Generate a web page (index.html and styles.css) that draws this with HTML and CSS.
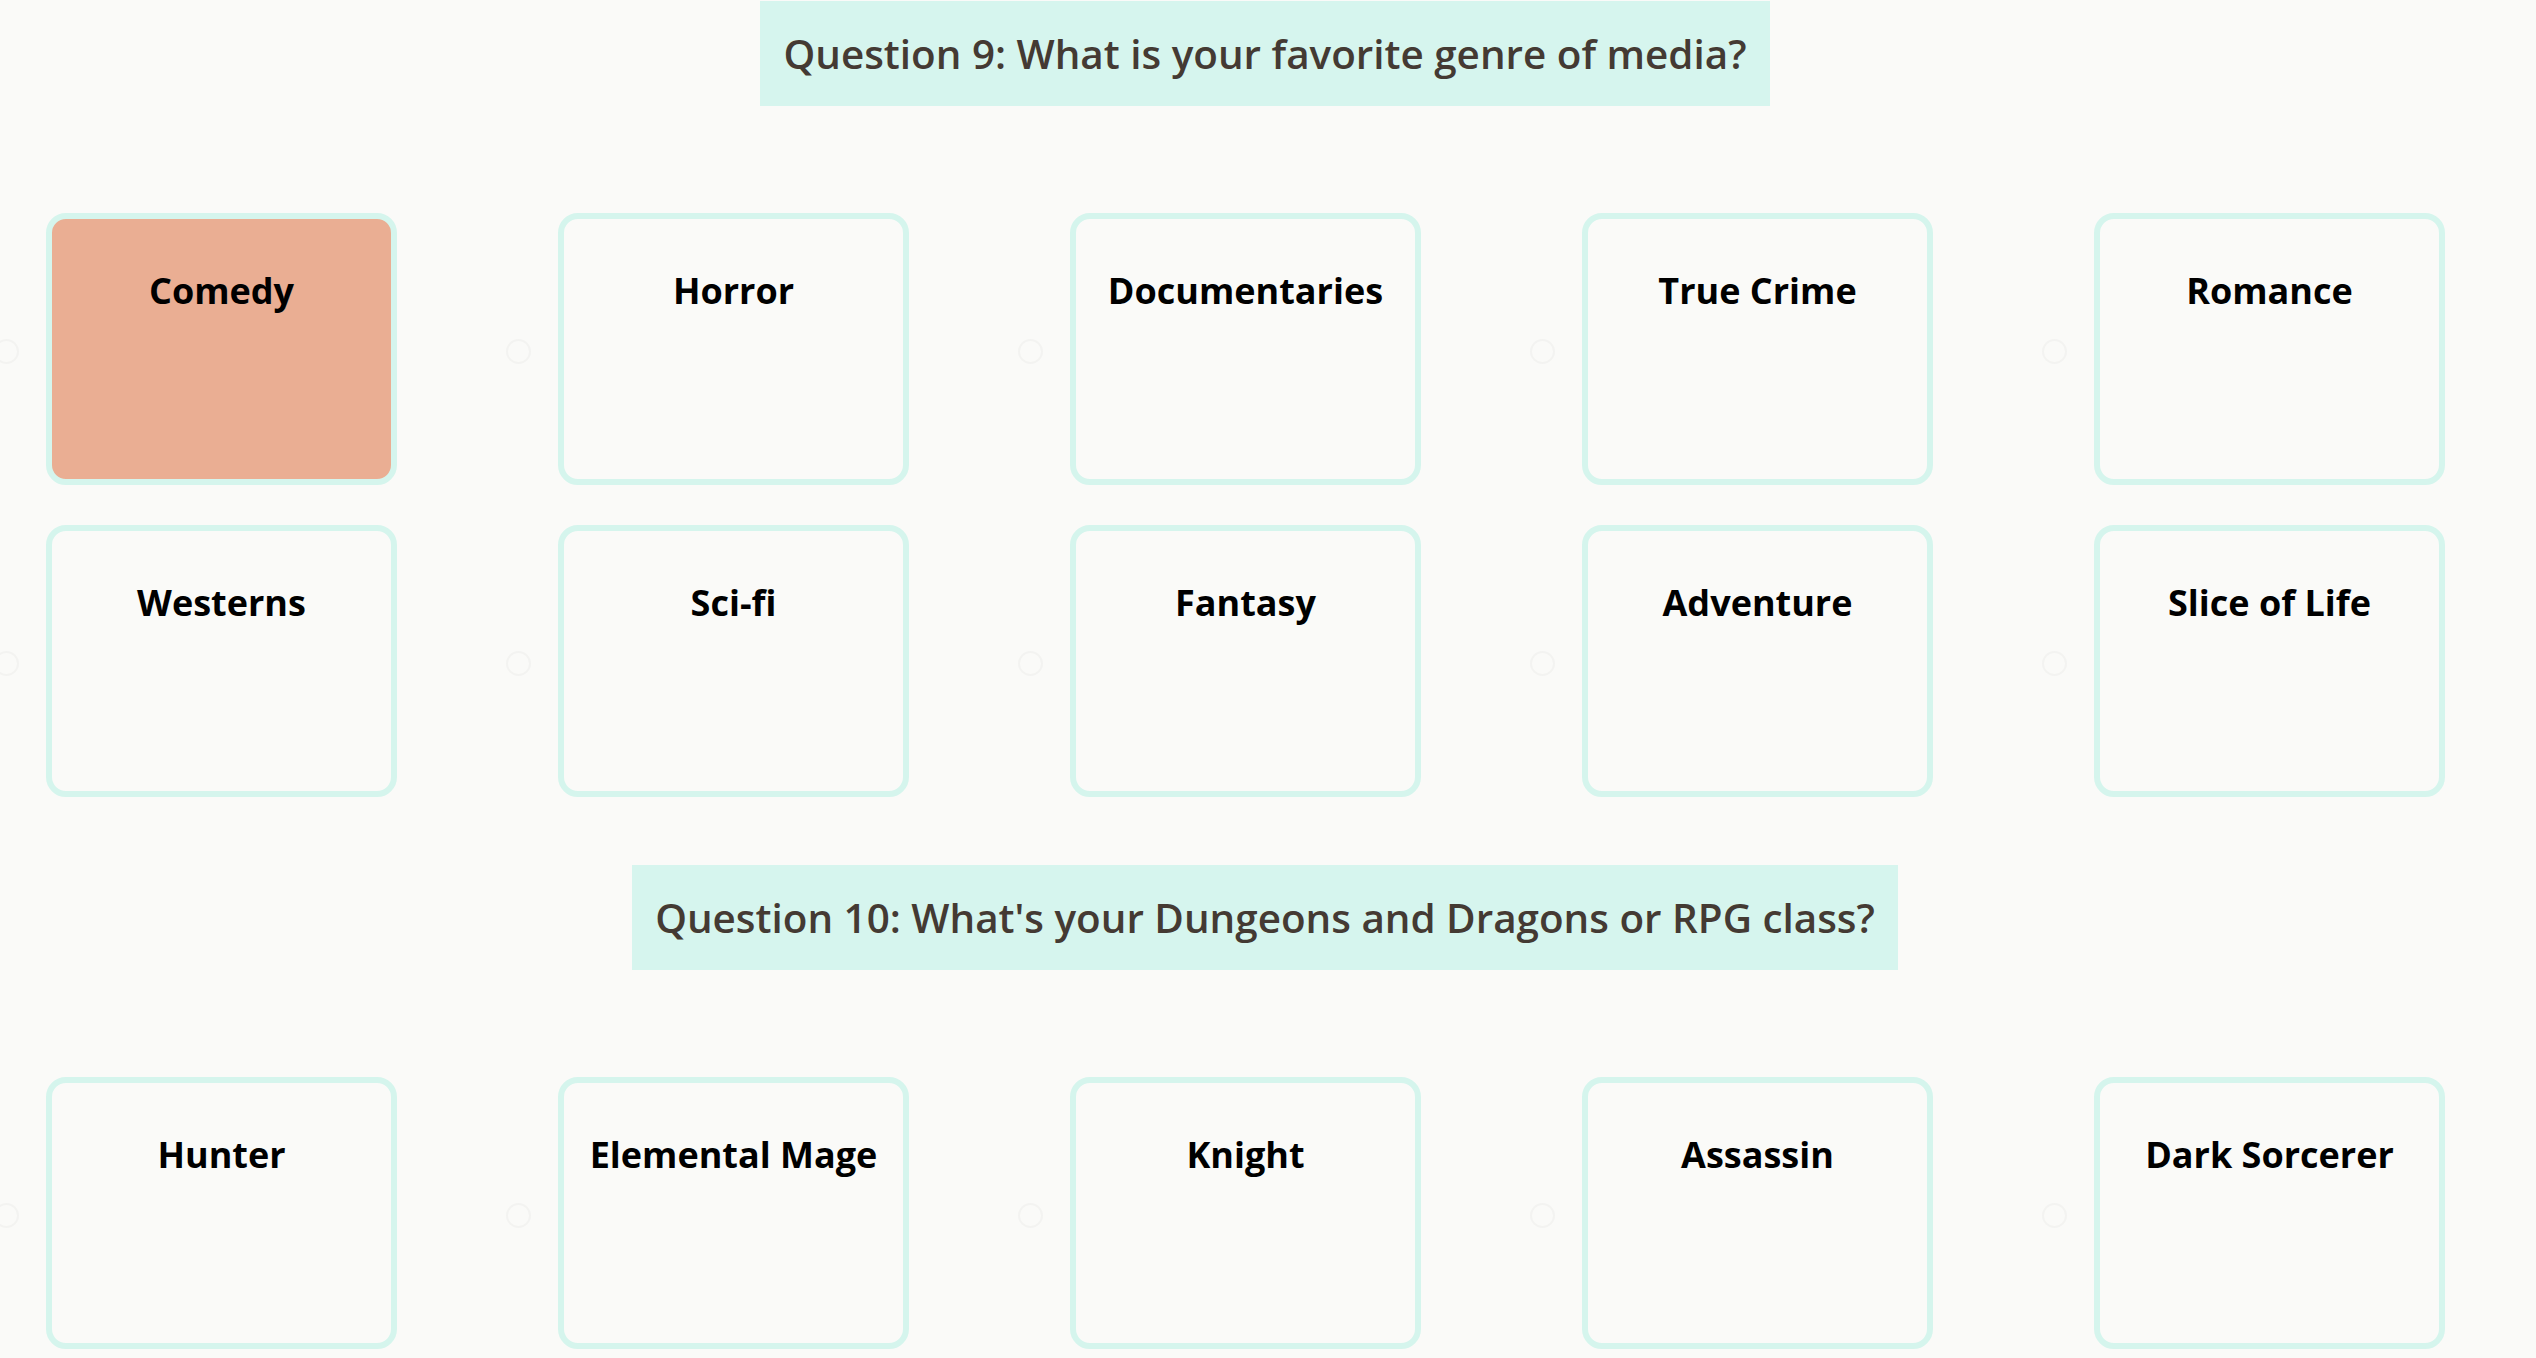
FILE: index.html
```html
<!DOCTYPE html>
<html lang="en">
<head>
<meta charset="utf-8">
<title>Quiz</title>
<link rel="stylesheet" href="styles.css">
</head>
<body>
<main class="quiz">
  <section class="question q9">
    <h2 class="q-title">Question 9: What is your favorite genre of media?</h2>
    <div class="options">
      <label class="option"><span class="radio"></span><span class="card selected">Comedy</span></label>
      <label class="option"><span class="radio"></span><span class="card">Horror</span></label>
      <label class="option"><span class="radio"></span><span class="card">Documentaries</span></label>
      <label class="option"><span class="radio"></span><span class="card">True Crime</span></label>
      <label class="option"><span class="radio"></span><span class="card">Romance</span></label>
      <label class="option"><span class="radio"></span><span class="card">Westerns</span></label>
      <label class="option"><span class="radio"></span><span class="card">Sci-fi</span></label>
      <label class="option"><span class="radio"></span><span class="card">Fantasy</span></label>
      <label class="option"><span class="radio"></span><span class="card">Adventure</span></label>
      <label class="option"><span class="radio"></span><span class="card">Slice of Life</span></label>
    </div>
  </section>
  <section class="question q10">
    <h2 class="q-title">Question 10: What's your Dungeons and Dragons or RPG class?</h2>
    <div class="options">
      <label class="option"><span class="radio"></span><span class="card">Hunter</span></label>
      <label class="option"><span class="radio"></span><span class="card">Elemental Mage</span></label>
      <label class="option"><span class="radio"></span><span class="card">Knight</span></label>
      <label class="option"><span class="radio"></span><span class="card">Assassin</span></label>
      <label class="option"><span class="radio"></span><span class="card">Dark Sorcerer</span></label>
    </div>
  </section>
</main>
</body>
</html>
```
FILE: styles.css
```css
html, body {
  margin: 0;
  padding: 0;
  background: #fafaf8;
}
body {
  overflow: hidden;
  font-family: "Open Sans", "Noto Sans", sans-serif;
}
.quiz {
  padding-top: 1px;
  padding-right: 6px;
}
.question {
  display: flex;
  flex-direction: column;
}
.q9 {
  margin-bottom: 68px;
}
.q-title {
  align-self: center;
  margin: 0 0 107px 0;
  padding: 0 23px;
  height: 105px;
  line-height: 105px;
  background: #d6f5ee;
  color: #443a33;
  font-size: 40.4px;
  font-weight: 600;
  white-space: nowrap;
}
.options {
  display: grid;
  grid-template-columns: repeat(5, 351px);
  column-gap: 161px;
  row-gap: 40px;
  padding-left: 46px;
}
.option {
  position: relative;
  display: block;
}
.radio {
  position: absolute;
  left: -52px;
  top: 126px;
  width: 25px;
  height: 25px;
  box-sizing: border-box;
  border-radius: 50%;
  border: 2px solid #f3f3f1;
  background: #fafaf8;
}
.card {
  display: block;
  box-sizing: border-box;
  width: 351px;
  height: 272px;
  border: 6px solid #d5f5ed;
  border-radius: 20px;
  background: #fafaf8;
  padding-top: 50px;
  text-align: center;
  color: #000;
  font-size: 36px;
  font-weight: 700;
  line-height: 1.2;
}
.card.selected {
  background: #eaae93;
}
```
